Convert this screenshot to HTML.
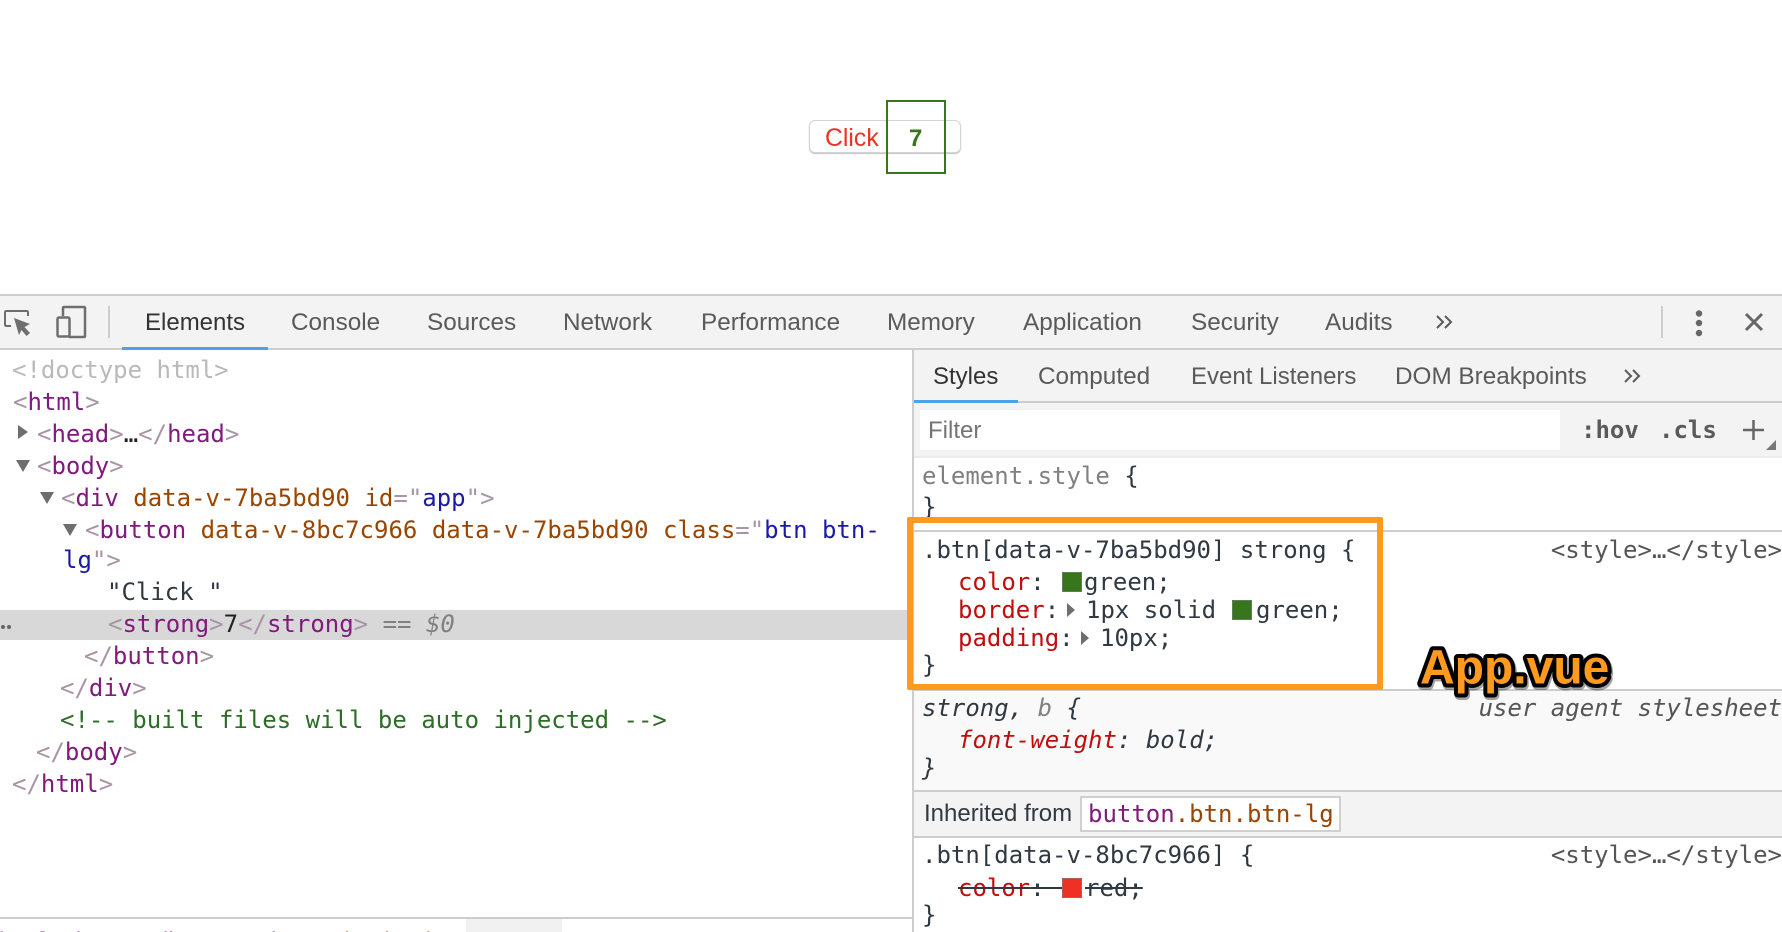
<!DOCTYPE html>
<html><head><meta charset="utf-8"><style>
html,body{margin:0;padding:0;background:#fff}
body{width:1782px;height:932px;position:relative;overflow:hidden;font-family:"DejaVu Sans Mono","Liberation Mono",monospace;font-size:24px;color:#303942}
.t{position:absolute;white-space:pre;line-height:32px;height:32px}
.s{font-family:"Liberation Sans",sans-serif;color:#5a5a5a}
.m{font-size:24.3px}
.b{position:absolute}
.g{color:#a894a6}.p{color:#801a7c}.o{color:#994500}.n{color:#1a1aa6}.k{color:#222}
.r{color:#c00d0d}.gy{color:#808080}.c{color:#2c6e26}.sw{position:absolute;width:20px;height:20px;box-sizing:border-box;border:1px solid rgba(128,128,128,.6)}
.tr{position:absolute;width:0;height:0;border-left:10px solid #6e6e6e;border-top:7px solid transparent;border-bottom:7px solid transparent}
.td{position:absolute;width:0;height:0;border-top:12px solid #6e6e6e;border-left:7px solid transparent;border-right:7px solid transparent}
.trs{position:absolute;width:0;height:0;border-left:8px solid #6e6e6e;border-top:7px solid transparent;border-bottom:7px solid transparent}
</style></head><body>

<!-- page button -->
<div class="b" style="left:809px;top:120px;width:152px;height:33px;box-sizing:border-box;border:1px solid #d4d4d4;border-radius:6px;background:#fff;box-shadow:0 1px 1px rgba(0,0,0,.25)"></div>
<div class="t s" style="left:825px;top:123px;font-size:24.8px;color:#ee3124">Click</div>
<div class="b" style="left:886px;top:100px;width:60px;height:74px;box-sizing:border-box;border:2px solid #38761d"></div>
<div class="t s" style="left:909px;top:123px;font-weight:bold;color:#38761d">7</div>

<!-- main toolbar -->
<div class="b" style="left:0;top:294px;width:1782px;height:56px;background:#f3f3f3;box-sizing:border-box;border-top:2px solid #cdcdcd;border-bottom:2px solid #cdcdcd"></div>
<svg class="b" style="left:0;top:296px" width="130" height="50" viewBox="0 0 130 50" fill="none">
<path d="M11 30H6.500Q5 30 5 28.500V16.500Q5 15 6.500 15H26.500Q28 15 28 16.500V20" stroke="#6e6e6e" stroke-width="2"/>
<path d="M14 22L30 28L24.500 31L30 37L26.500 40L21.500 34L19 39Z" fill="#6e6e6e"/>
<path d="M63 20V12Q63 11 64 11H84Q85 11 85 12V40Q85 41 84 41H69" stroke="#6e6e6e" stroke-width="2.500"/>
<rect x="57.500" y="21.500" width="12" height="19" rx="1.500" stroke="#6e6e6e" stroke-width="2.500"/>
</svg>
<div class="b" style="left:108px;top:306px;width:2px;height:32px;background:#cdcdcd"></div>
<div class="b" style="left:122px;top:347px;width:146px;height:3px;background:#4ca1ed"></div>
<div class="t s" style="left:145px;top:307px;color:#333">Elements</div>
<div class="t s m" style="left:291px;top:307px">Console</div>
<div class="t s m" style="left:427px;top:307px">Sources</div>
<div class="t s m" style="left:563px;top:307px">Network</div>
<div class="t s m" style="left:701px;top:307px">Performance</div>
<div class="t s m" style="left:887px;top:307px">Memory</div>
<div class="t s m" style="left:1023px;top:307px">Application</div>
<div class="t s m" style="left:1191px;top:307px">Security</div>
<div class="t s m" style="left:1325px;top:307px">Audits</div>
<svg class="b" style="left:1436px;top:314px" width="18" height="16" fill="none" stroke="#5a5a5a" stroke-width="2"><path d="M1 2L7 8L1 14M9 2L15 8L9 14"/></svg>
<div class="b" style="left:1661px;top:306px;width:2px;height:32px;background:#cdcdcd"></div>
<svg class="b" style="left:1690px;top:306px" width="80" height="34" fill="#666"><circle cx="9" cy="7.500" r="3.200"/><circle cx="9" cy="17" r="3.200"/><circle cx="9" cy="27" r="3.200"/><path d="M56 8L72 24M72 8L56 24" stroke="#666" stroke-width="3" fill="none"/></svg>

<!-- elements panel -->
<div class="b" style="left:0;top:610px;width:912px;height:30px;background:#d8d8d8"></div>
<div class="b" style="left:1px;top:625px;width:4px;height:4px;border-radius:50%;background:#666"></div>
<div class="b" style="left:7px;top:625px;width:4px;height:4px;border-radius:50%;background:#666"></div>

<div class="t" style="left:12px;top:354px;color:#b9b9b9">&lt;!doctype html&gt;</div>
<div class="t" style="left:13px;top:386px"><span class="g">&lt;</span><span class="p">html</span><span class="g">&gt;</span></div>
<div class="tr" style="left:18px;top:425px"></div>
<div class="t" style="left:37px;top:418px"><span class="g">&lt;</span><span class="p">head</span><span class="g">&gt;</span><span class="k">…</span><span class="g">&lt;/</span><span class="p">head</span><span class="g">&gt;</span></div>
<div class="td" style="left:16px;top:460px"></div>
<div class="t" style="left:37px;top:450px"><span class="g">&lt;</span><span class="p">body</span><span class="g">&gt;</span></div>
<div class="td" style="left:40px;top:492px"></div>
<div class="t" style="left:61px;top:482px"><span class="g">&lt;</span><span class="p">div</span> <span class="o">data-v-7ba5bd90</span> <span class="o">id</span><span class="g">="</span><span class="n">app</span><span class="g">"&gt;</span></div>
<div class="td" style="left:63px;top:524px"></div>
<div class="t" style="left:85px;top:514px"><span class="g">&lt;</span><span class="p">button</span> <span class="o">data-v-8bc7c966</span> <span class="o">data-v-7ba5bd90</span> <span class="o">class</span><span class="g">="</span><span class="n">btn btn-</span></div>
<div class="t" style="left:63px;top:544px"><span class="n">lg</span><span class="g">"&gt;</span></div>
<div class="t k" style="left:107px;top:576px;color:#303942">"Click "</div>
<div class="t" style="left:108px;top:608px"><span class="g">&lt;</span><span class="p">strong</span><span class="g">&gt;</span><span class="k">7</span><span class="g">&lt;/</span><span class="p">strong</span><span class="g">&gt;</span> <span style="color:#808080">==</span> <span style="color:#808080;font-style:italic">$0</span></div>
<div class="t" style="left:84px;top:640px"><span class="g">&lt;/</span><span class="p">button</span><span class="g">&gt;</span></div>
<div class="t" style="left:60px;top:672px"><span class="g">&lt;/</span><span class="p">div</span><span class="g">&gt;</span></div>
<div class="t c" style="left:60px;top:704px">&lt;!-- built files will be auto injected --&gt;</div>
<div class="t" style="left:36px;top:736px"><span class="g">&lt;/</span><span class="p">body</span><span class="g">&gt;</span></div>
<div class="t" style="left:12px;top:768px"><span class="g">&lt;/</span><span class="p">html</span><span class="g">&gt;</span></div>

<!-- breadcrumbs -->
<div class="b" style="left:0;top:917px;width:913px;height:2px;background:#cdcdcd"></div>
<div class="b" style="left:466px;top:919px;width:96px;height:13px;background:#f1f1f1"></div>
<div class="b" style="left:0;top:919px;width:620px;height:13px;overflow:hidden">
<div class="t s" style="left:-1px;top:7px;color:#801a7c">html</div>
<div class="t s" style="left:41px;top:7px;color:#801a7c">body</div>
<div class="t s" style="left:155px;top:7px"><span class="p">div</span><span class="o" style="color:#303942">#app</span></div>
<div class="t s" style="left:271px;top:7px"><span class="p">button</span><span class="o">.btn.btn-lg</span></div>
<div class="t s" style="left:482px;top:7px;color:#801a7c">strong</div>
</div>

<!-- styles panel -->
<div class="b" style="left:912px;top:350px;width:2px;height:582px;background:#cdcdcd"></div>
<div class="b" style="left:914px;top:350px;width:868px;height:107px;background:#f3f3f3"></div>
<div class="b" style="left:914px;top:401px;width:868px;height:2px;background:#cdcdcd"></div>
<div class="b" style="left:914px;top:400px;width:104px;height:3px;background:#4ca1ed"></div>
<div class="t s" style="left:933px;top:361px;color:#333">Styles</div>
<div class="t s m" style="left:1038px;top:361px">Computed</div>
<div class="t s" style="left:1191px;top:361px">Event Listeners</div>
<div class="t s m" style="left:1395px;top:361px">DOM Breakpoints</div>
<svg class="b" style="left:1624px;top:368px" width="18" height="16" fill="none" stroke="#5a5a5a" stroke-width="2"><path d="M1 2L7 8L1 14M9 2L15 8L9 14"/></svg>
<div class="b" style="left:920px;top:410px;width:640px;height:40px;background:#fff"></div>
<div class="t s" style="left:928px;top:415px;color:#757575">Filter</div>
<div class="t" style="left:1581px;top:414px;font-weight:bold;color:#5a5a5a">:hov</div>
<div class="t" style="left:1659px;top:414px;font-weight:bold;color:#5a5a5a">.cls</div>
<svg class="b" style="left:1740px;top:418px" width="40" height="34"><path d="M13.500 2V22M3 12H24" stroke="#666" stroke-width="2.500"/><path d="M36 22V32H26Z" fill="#777"/></svg>
<div class="b" style="left:914px;top:456px;width:868px;height:2px;background:#ececec"></div>

<div class="t" style="left:922px;top:460px"><span class="gy">element.style</span> {</div>
<div class="t" style="left:922px;top:491px">}</div>
<div class="b" style="left:914px;top:530px;width:868px;height:2px;background:#cdcdcd"></div>

<div class="t" style="left:922px;top:534px">.btn[data-v-7ba5bd90] strong {</div>
<div class="t s" style="font-family:'DejaVu Sans Mono',monospace;right:0;top:534px;color:#555">&lt;style&gt;…&lt;/style&gt;</div>
<div class="t" style="left:958px;top:566px"><span class="r">color</span>:</div>
<div class="sw" style="left:1062px;top:572px;background:#38761d"></div>
<div class="t" style="left:1084px;top:566px">green;</div>
<div class="t" style="left:958px;top:594px"><span class="r">border</span>:</div>
<div class="trs" style="left:1067px;top:603px"></div>
<div class="t" style="left:1086px;top:594px">1px solid</div>
<div class="sw" style="left:1232px;top:600px;background:#38761d"></div>
<div class="t" style="left:1256px;top:594px">green;</div>
<div class="t" style="left:958px;top:622px"><span class="r">padding</span>:</div>
<div class="trs" style="left:1081px;top:631px"></div>
<div class="t" style="left:1100px;top:622px">10px;</div>
<div class="t" style="left:922px;top:649px">}</div>

<div class="b" style="left:914px;top:689px;width:868px;height:102px;background:#f9f9f9;border-top:2px solid #cdcdcd;box-sizing:border-box"></div>
<div class="t" style="left:922px;top:692px;font-style:italic">strong, <span class="gy">b</span> {</div>
<div class="t" style="right:0;top:692px;font-style:italic;color:#555">user agent stylesheet</div>
<div class="t" style="left:958px;top:724px;font-style:italic"><span class="r">font-weight</span>: bold;</div>
<div class="t" style="left:922px;top:752px;font-style:italic">}</div>

<div class="b" style="left:914px;top:790px;width:868px;height:48px;background:#f3f3f3;box-sizing:border-box;border-top:2px solid #cdcdcd;border-bottom:2px solid #cdcdcd"></div>
<div class="t s" style="left:924px;top:798px;color:#303942">Inherited from</div>
<div class="b" style="left:1080px;top:796px;width:261px;height:36px;box-sizing:border-box;border:2px solid #d0d0d0;background:#fff"></div>
<div class="t" style="left:1088px;top:798px"><span class="p">button</span><span class="o">.btn.btn-lg</span></div>

<div class="t" style="left:922px;top:839px">.btn[data-v-8bc7c966] {</div>
<div class="t" style="right:0;top:839px;color:#555">&lt;style&gt;…&lt;/style&gt;</div>
<div class="t" style="left:958px;top:872px;text-decoration:line-through"><span class="r">color</span>:  </div>
<div class="sw" style="left:1062px;top:878px;background:#ee3124"></div>
<div class="t" style="left:1085px;top:872px;text-decoration:line-through">red;</div>
<div class="t" style="left:922px;top:899px">}</div>

<!-- annotations -->
<div class="b" style="left:907px;top:517px;width:476px;height:173px;box-sizing:border-box;border:6px solid #ff9a1f;border-radius:2px"></div>
<svg class="b" style="left:1400px;top:630px;overflow:visible" width="240" height="80">
<text x="20" y="53.500" font-family="Liberation Sans, sans-serif" font-weight="bold" font-size="48" fill="#000" stroke="#000" stroke-width="9" stroke-linejoin="round" opacity=".35" dx="1" dy="2">App.vue</text>
<text x="20" y="53.500" font-family="Liberation Sans, sans-serif" font-weight="bold" font-size="48" fill="#ff9a1f" stroke="#000" stroke-width="8" stroke-linejoin="round" paint-order="stroke fill">App.vue</text>
</svg>

</body></html>
